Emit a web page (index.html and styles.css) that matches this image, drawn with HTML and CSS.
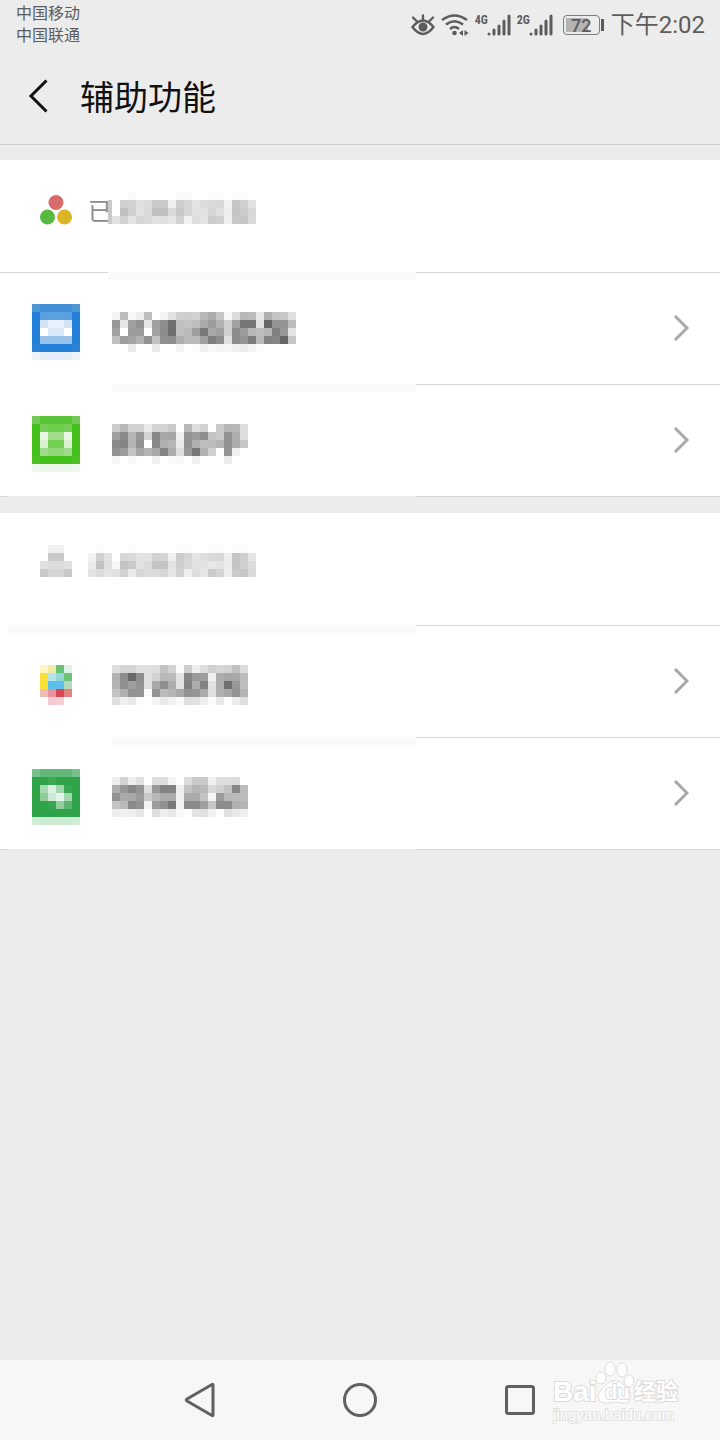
FILE: index.html
```html
<!DOCTYPE html>
<html lang="zh-CN">
<head>
<meta charset="UTF-8">
<meta name="viewport" content="width=device-width, initial-scale=1">
<title>辅助功能</title>
<link rel="stylesheet" href="styles.css">
</head>
<body>
<div class="statusbar">
  <div class="carriers">
    <div>中国移动</div>
    <div>中国联通</div>
  </div>
  <div class="status-icons">
    <svg width="24" height="22" viewBox="0 0 24 22" fill="none" stroke="#5c5c5c" stroke-width="2.400">
      <path d="M1.500 13Q12 0 22.500 13Q12 27 1.500 13Z"/>
      <path d="M12 5V1.500M5.500 7L2 3.500M18.500 7L22 3.500" stroke-linecap="round"/>
      <circle cx="12" cy="13" r="4.500" fill="#5c5c5c" stroke="none"/>
    </svg>
    <svg width="28" height="22" viewBox="0 0 28 22" fill="none" stroke="#5c5c5c" stroke-width="2.500">
      <path d="M1 6Q13.500 -3 26 6M5 10.500Q13.500 4 22 10.500M9 15Q13.500 11 18 15"/>
      <circle cx="13.500" cy="19" r="2.300" fill="#5c5c5c" stroke="none"/>
      <path d="M22 16v6l-4-3zM23.500 16v6l4-3z" fill="#5c5c5c" stroke="none"/>
    </svg>
    <div class="signal">
      <span>4G</span>
      <svg width="24" height="22" viewBox="0 0 24 22" stroke="#5c5c5c" stroke-width="3" stroke-linecap="round">
        <path d="M2 20v0M7 20v-4M12 20v-8M17 20v-13M22 20v-18"/>
      </svg>
    </div>
    <div class="signal">
      <span>2G</span>
      <svg width="24" height="22" viewBox="0 0 24 22" stroke="#5c5c5c" stroke-width="3" stroke-linecap="round">
        <path d="M2 20v0M7 20v-4M12 20v-8M17 20v-13M22 20v-18"/>
      </svg>
    </div>
    <div class="battery">72</div>
    <div class="clock">下午2:02</div>
  </div>
</div>

<header class="titlebar">
  <button class="back" aria-label="返回">
    <svg width="20" height="34" viewBox="0 0 20 34" fill="none" stroke="#111" stroke-width="3">
      <path d="M18.500 1.500L3 17L18.500 32.500"/>
    </svg>
  </button>
  <h1>辅助功能</h1>
</header>

<main>
  <section class="group">
    <h2 class="heading">
      <svg class="dots" width="32" height="33" viewBox="0 0 32 33">
        <circle cx="16" cy="10.500" r="7.500" fill="#d96a6a"/>
        <circle cx="7.500" cy="25" r="7.500" fill="#58b940"/>
        <circle cx="24.500" cy="25" r="7.500" fill="#dcb525"/>
      </svg>
      <span class="first-char">已</span>
      <span data-mosaic="enabled"></span>
    </h2>
    <button class="row">
      <span class="icon" data-mosaic="mailIcon"></span>
      <span class="name" data-mosaic="mail"></span>
      <svg class="chevron" width="16" height="26" viewBox="0 0 16 26"><path d="M2 1L14 13L2 25"/></svg>
    </button>
    <button class="row no-left">
      <span class="icon" data-mosaic="helperIcon"></span>
      <span class="name" data-mosaic="helper"></span>
      <svg class="chevron" width="16" height="26" viewBox="0 0 16 26"><path d="M2 1L14 13L2 25"/></svg>
    </button>
  </section>

  <section class="group">
    <h2 class="heading">
      <span class="people" data-mosaic="people"></span>
      <span data-mosaic="disabled"></span>
    </h2>
    <button class="row no-left wide">
      <span class="icon" data-mosaic="newsIcon"></span>
      <span class="name" data-mosaic="news"></span>
      <svg class="chevron" width="16" height="26" viewBox="0 0 16 26"><path d="M2 1L14 13L2 25"/></svg>
    </button>
    <button class="row no-left">
      <span class="icon" data-mosaic="chatIcon"></span>
      <span class="name" data-mosaic="chat"></span>
      <svg class="chevron" width="16" height="26" viewBox="0 0 16 26"><path d="M2 1L14 13L2 25"/></svg>
    </button>
  </section>
</main>

<nav class="navbar">
  <button aria-label="后退">
    <svg width="36" height="36" viewBox="0 0 36 36"><path d="M31 3V33Q31 34 30 33.500L5 19Q3.500 18 5 17L30 2.500Q31 2 31 3Z"/></svg>
  </button>
  <button aria-label="主页">
    <svg width="36" height="36" viewBox="0 0 36 36"><circle cx="18" cy="18" r="15.500"/></svg>
  </button>
  <button aria-label="最近任务">
    <svg width="36" height="36" viewBox="0 0 36 36"><rect x="4.500" y="4.500" width="27" height="27" rx="2"/></svg>
  </button>
  <svg class="watermark" width="132" height="76" viewBox="0 0 132 76">
    <text class="brand" x="1" y="49">Bai</text>
    <ellipse cx="49" cy="26" rx="5" ry="6"/>
    <ellipse cx="58" cy="17" rx="5" ry="7"/>
    <ellipse cx="70" cy="18" rx="5" ry="7"/>
    <ellipse cx="77" cy="29" rx="5" ry="6"/>
    <path d="M54 33Q63 24 72 33Q78 38 79 43Q79 52 71 51Q63 49 55 51Q46 52 46 43Q48 38 54 33Z"/>
    <text class="du" x="53" y="47">du</text>
    <text class="cjk" x="82" y="47">经验</text>
    <text class="url" x="1" y="68">jingyan.baidu.com</text>
  </svg>
</nav>

<script src="mosaic.js"></script>
</body>
</html>
```
FILE: styles.css
```css
* {
  box-sizing: border-box;
}
body {
  margin: 0;
  min-height: 100vh;
  display: flex;
  flex-direction: column;
  background: #ececec;
  font-family: Roboto, "Noto Sans CJK SC", sans-serif;
}
button {
  margin: 0;
  padding: 0;
  border: none;
  background: none;
  cursor: pointer;
}
svg {
  display: block;
  flex: none;
}

/* status bar */
.statusbar {
  display: flex;
  justify-content: space-between;
  height: 48px;
  padding: 3px 15px 0 16px;
  color: #5c5c5c;
}
.carriers {
  font-size: 16px;
  line-height: 22px;
}
.status-icons {
  display: flex;
  align-items: center;
  height: 43px;
  gap: 6px;
}
.signal {
  display: flex;
  align-items: flex-start;
}
.signal span {
  width: 12px;
  font: bold 12px/12px "Roboto Condensed", Roboto, sans-serif;
}
.battery {
  position: relative;
  width: 37px;
  height: 20px;
  margin: 0 5px 0 4px;
  border: 1px solid #7c7c7c;
  border-radius: 4px;
  background: linear-gradient(#b4b4b4, #b4b4b4) 2px 2px / 22px 14px no-repeat;
  font-size: 18px;
  font-weight: 500;
  line-height: 19px;
  text-align: center;
}
.battery::after {
  content: "";
  position: absolute;
  right: -5px;
  top: 3px;
  width: 3px;
  height: 12px;
  background: #5c5c5c;
}
.clock {
  font-size: 24px;
  line-height: 32px;
}

/* title */
.titlebar {
  display: flex;
  align-items: center;
  height: 97px;
  padding: 0 28px;
  border-bottom: 1px solid #d0d0d0;
}
.back {
  width: 52px;
}
.titlebar h1 {
  margin: 0;
  padding-top: 4px;
  color: #111;
  font-size: 34px;
  font-weight: 400;
  line-height: 48px;
}

/* list */
main {
  flex: 1;
  padding-top: 15px;
}
.group {
  margin-bottom: 16px;
  border-bottom: 1px solid;
  border-image: linear-gradient(to right, #d4d4d4 8px, #ebebeb 8px, #ebebeb 416px, #d4d4d4 416px) 1;
  background: #fff;
}
.heading {
  display: flex;
  height: 112px;
  margin: 0;
  padding: 32px 40px;
  font-size: 24px;
  font-weight: 400;
}
.dots, .people {
  width: 32px;
  margin-right: 16px;
}
.first-char {
  width: 24px;
  height: 24px;
  margin-top: 8px;
  overflow: hidden;
  border-right: 4px solid #cacaca;
  color: #8c8c8c;
  line-height: 24px;
}
.row {
  position: relative;
  display: flex;
  align-items: center;
  width: 100%;
  height: 112px;
  padding: 8px 31px 0 32px;
}
.row::before, .row::after {
  content: "";
  position: absolute;
  top: 0;
}
.row::before {
  right: 0;
  left: 416px;
  height: 1px;
  background: #d4d4d4;
}
.row::after {
  left: 0;
  width: 416px;
  height: 8px;
  background:
    linear-gradient(#d4d4d4, #d4d4d4) 0 0 / 108px 1px no-repeat,
    linear-gradient(#fafafa, #fafafa) 108px 0 no-repeat;
}
.row.no-left::after {
  left: 112px;
  width: 304px;
  background: #fafafa;
}
.row.wide::after {
  left: 8px;
  width: 408px;
}
.icon {
  display: flex;
  justify-content: center;
  width: 48px;
  margin-right: 32px;
}
.chevron {
  margin: -8px 0 0 auto;
  fill: none;
  stroke: #a8a8a8;
  stroke-width: 3;
}

/* navigation keys */
.navbar {
  position: relative;
  display: flex;
  justify-content: center;
  height: 80px;
  background: #f7f7f7;
}
.navbar button {
  display: flex;
  align-items: center;
  justify-content: center;
  width: 160px;
}
.navbar button svg {
  fill: none;
  stroke: #616161;
  stroke-width: 3;
}
.watermark {
  position: absolute;
  right: 36px;
  top: -8px;
  fill: #fff;
  stroke: #dcdcdc;
  stroke-width: 1;
}
.watermark text {
  paint-order: stroke;
  stroke-width: 2;
}
.watermark .brand {
  font: bold 28px "Liberation Sans", sans-serif;
}
.watermark .du {
  font: bold 20px "Liberation Sans", sans-serif;
}
.watermark .cjk {
  font: bold 22px "Noto Sans CJK SC", sans-serif;
}
.watermark .url {
  font: 15px "Liberation Sans", sans-serif;
  stroke: #e2e2e2;
}
```
FILE: mosaic.js
```js
// 8px blocks. Text rows hold two hex digits of grey per block.
const CELL = 8;

const grey = {
  enabled: [
    'fffff9fffffffffff9f9fffffcfcfffcfcff',
    'ffcfd2dfdcc9c9efced6e3dcdad7f1c6cfe1',
    'ffbfcfe1d9bfbfd9c8d5e1e1d5dfedc3cbd8',
    'e1d2e4d6d9e2e0e6d1f1dde3cbd0f0c8c6d9'
  ],
  mail: [
    'f3bcf8edbdfff3e2cfcdd2b8acc6f8dbb8bce8b0c3c7e0',
    '98e69f92e6a08e70bfc4bea99bb2cfa27777e2679394bb',
    'a1ff9c9cffa28b6fbfb99e78a79fcf8c9cb7beb68098e4',
    'c09da3b291c1908dadbab99f7e8be08c937dba828667c6',
    'ffffeaffffeafffff3fffbf0f7f4f5efecf4fbffffffff'
  ],
  helper: [
    'cbb7d1d1ead4d4c9ffb8ddd1ffc9b5b8de',
    '9f8ab598d488a7a5ef939b8ec4c992aedd',
    '8a84b492ff88b0b5ea91afbebcb491acc5',
    '929cc4a6b4a883acdd9777b2d0fe93efff',
    'f6fff8feffeffff9f8ffefffffffebffff'
  ],
  people: [
    'ffefefff',
    'ffcacaff',
    'e1dcdce1',
    'c9d5d5c9'
  ],
  disabled: [
    'fffbfffffffbfffffffffffbfbfffffbfbfffbfbff',
    'f1d1e2ffd7dae3e2d2d5efcbd6e5dfdad7eec5cfe5',
    'ebc1dff8c3cae2dac4c3e3cfd9e2e3e8e3ecc4d1dc',
    'e4dce4e1d1e9d6dcdad6e6d2efdde6cbd3efcac7da'
  ],
  news: [
    'dfd4d4e0e0dec3d3fbcdeddfd0d6d3c1db',
    'b28d688ddfd3b8bbe3859a9ff1ada7a8bc',
    'b3919e92dfa98eace280ac82e2ae7097bf',
    'c3b09393fa93bbb4aa9296aadfb1a793b4',
    'e0efeafbfef4eaf2fadfe1effbe8ffeddf'
  ],
  chat: [
    'edd3ede1ffdfdef5ffdbcacaefdedddcff',
    'ae978894de988383eec2b6bad9d1c288bb',
    '93aaa89acab7abaaf0acabc4f69bb9bbbd',
    'c3bb8b93f39c9078f18a8a9fc78b8db0b5',
    'eef1efe7ffdfeee7f8ffe4e0f2ffe1e8ee'
  ]
};

const colour = {
  mailIcon: [
    '4f97d4 4190d6 4190d6 4190d6 4190d6 4f97d4',
    '2380d8 5aa0e1 5ca2e3 5ca2e3 5aa0e1 2380d8',
    '2380d8 d3e5f5 e9f2fb e9f2fb d3e5f5 2380d8',
    '2380d8 ffffff d8e8f6 d8e8f6 ffffff 2380d8',
    '2380d8 99c2ea 96c1ea 96c1ea 99c2ea 2380d8',
    '2a83d8 2380d8 2380d8 2380d8 2380d8 2a83d8',
    'f0f4f9 e5effa e5effa e5effa e5effa f0f4f9'
  ],
  helperIcon: [
    '73c953 5bc338 5bc338 5bc338 5bc338 73c953',
    '43c01c 73ce55 6ccc4c 6ccc4c 73ce55 43c01c',
    '43c01c e8f6e3 a0dc89 a0dc89 e8f6e3 43c01c',
    '43c01c d9f1d1 71cf51 71cf51 d9f1d1 43c01c',
    '43c01c a0da8b 92d77a 92d77a a0da8b 43c01c',
    '4ac224 43c01c 43c01c 43c01c 43c01c 4ac224',
    'f0f8ed ebf7e7 ebf7e7 ebf7e7 ebf7e7 f0f8ed'
  ],
  newsIcon: [
    'fff7c4 f1eba6 66c07a def3e3',
    'fbe137 b5e3ee 93d6d8 6bc279',
    'fbe137 5ac0ea 5ac0ea b5dabb',
    'efbcb3 e7919c da4753 e08081',
    'ffffff f6c9cf f5d0d5 ffffff'
  ],
  chatIcon: [
    '76c089 63b978 63b978 63b978 63b978 76c089',
    '2ea348 2ea348 3ba854 2ea348 2ea348 2ea348',
    '2ea348 a7d9b2 dcf0e1 9fd5ac 3aa753 2ea348',
    '2ea348 8dcb9b cdead4 e5f5e9 a4d6b0 2ea348',
    '2ea348 2ea348 37a651 90ce9e 59b56e 2ea348',
    '2ea348 2ea348 2ea348 2ea348 2ea348 2ea348',
    'd3ebd9 cdead4 cdead4 cdead4 cdead4 d3ebd9'
  ]
};

function cells(name) {
  if (colour[name]) {
    return colour[name].map(row => row.split(' '));
  }
  return grey[name].map(row => row.match(/../g).map(v => v + v + v));
}

document.querySelectorAll('[data-mosaic]').forEach(el => {
  const rows = cells(el.dataset.mosaic);
  const w = rows[0].length * CELL;
  const h = rows.length * CELL;
  let rects = '';
  rows.forEach((row, y) => {
    row.forEach((c, x) => {
      rects += `<rect x="${x * CELL}" y="${y * CELL}" width="${CELL}" height="${CELL}" fill="#${c}"/>`;
    });
  });
  el.innerHTML = `<svg width="${w}" height="${h}" viewBox="0 0 ${w} ${h}" shape-rendering="crispEdges">${rects}</svg>`;
});
```
